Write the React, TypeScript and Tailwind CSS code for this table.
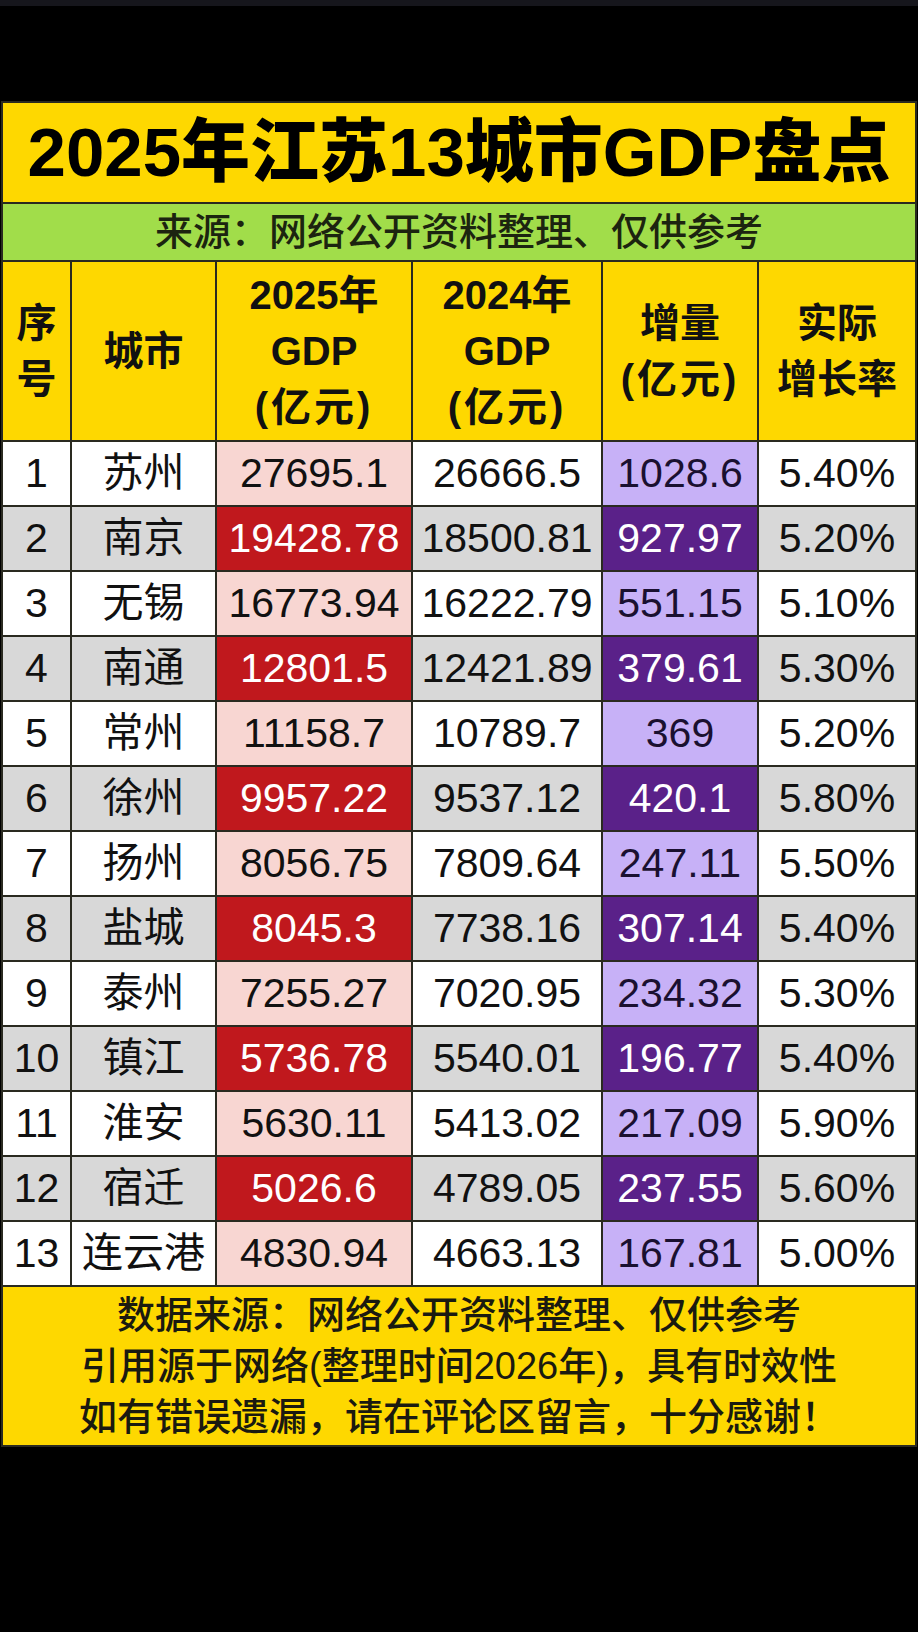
import React from "react";

type Row = [string, string, string, string, string, string];

const rows: Row[] = [
  ["1", "苏州", "27695.1", "26666.5", "1028.6", "5.40%"],
  ["2", "南京", "19428.78", "18500.81", "927.97", "5.20%"],
  ["3", "无锡", "16773.94", "16222.79", "551.15", "5.10%"],
  ["4", "南通", "12801.5", "12421.89", "379.61", "5.30%"],
  ["5", "常州", "11158.7", "10789.7", "369", "5.20%"],
  ["6", "徐州", "9957.22", "9537.12", "420.1", "5.80%"],
  ["7", "扬州", "8056.75", "7809.64", "247.11", "5.50%"],
  ["8", "盐城", "8045.3", "7738.16", "307.14", "5.40%"],
  ["9", "泰州", "7255.27", "7020.95", "234.32", "5.30%"],
  ["10", "镇江", "5736.78", "5540.01", "196.77", "5.40%"],
  ["11", "淮安", "5630.11", "5413.02", "217.09", "5.90%"],
  ["12", "宿迁", "5026.6", "4789.05", "237.55", "5.60%"],
  ["13", "连云港", "4830.94", "4663.13", "167.81", "5.00%"],
];

const font = "font-['Liberation_Sans','Noto_Sans_CJK_SC',sans-serif]";
const head = "h-[178px] bg-[#fed800] flex items-center justify-center text-center text-[40px] font-bold leading-[56px] text-[#111]";

export default function App() {
  return (
    <div className={`w-[918px] h-[1632px] bg-black ${font}`}>
      {/* top status strip */}
      <div className="h-[6px] bg-[#16161c]" />
      <div className="h-[95px]" />

      {/* ---TABLE CARD--- */}
      <div className="ml-[1px] w-[916px] border-2 border-[#2a2a20] bg-[#2a2a20] flex flex-col gap-[2px]">
        {/* title */}
        <div className="h-[99px] bg-[#fed800] flex items-center justify-center">
          <h1 className="text-[69px] font-black leading-none text-black">
            2025年江苏13城市GDP盘点
          </h1>
        </div>

        {/* source band */}
        <div className="h-[56px] bg-[#a1dd4a] flex items-center justify-center">
          <p className="text-[38px] font-medium leading-none text-[#1c2410]">
            来源：网络公开资料整理、仅供参考
          </p>
        </div>

        {/* grid */}
        <div className="grid grid-cols-[67px_143px_194px_188px_154px_156px] gap-[2px]">
          <div className={head}>
            序<br />号
          </div>
          <div className={head}>城市</div>
          <div className={head}>
            <div>
              2025年<br />GDP<br /><span className="tracking-[3px]">(亿元)</span>
            </div>
          </div>
          <div className={head}>
            <div>
              2024年<br />GDP<br /><span className="tracking-[3px]">(亿元)</span>
            </div>
          </div>
          <div className={head}>
            <div>
              增量<br /><span className="tracking-[3px]">(亿元)</span>
            </div>
          </div>
          <div className={head}>
            <div>
              实际<br />增长率
            </div>
          </div>

          {rows.map((r, i) => {
            const even = i % 2 === 1;
            const base = even ? "bg-[#d8d8d8]" : "bg-white";
            const cell = "h-[63px] flex items-center justify-center text-[41px] leading-none whitespace-nowrap";
            return (
              <React.Fragment key={r[0]}>
                <div className={`${cell} ${base} text-[#111]`}>{r[0]}</div>
                <div className={`${cell} ${base} text-[#111]`}>{r[1]}</div>
                <div className={`${cell} ${even ? "bg-[#c0181d] text-white" : "bg-[#f8d6d2] text-[#111]"}`}>{r[2]}</div>
                <div className={`${cell} ${base} text-[#111]`}>{r[3]}</div>
                <div className={`${cell} ${even ? "bg-[#5a2189] text-white" : "bg-[#c7b1f7] text-[#1a1030]"}`}>{r[4]}</div>
                <div className={`${cell} ${base} text-[#111]`}>{r[5]}</div>
              </React.Fragment>
            );
          })}
        </div>

        {/* footer note */}
        <div className="h-[158px] bg-[#fed800] flex flex-col items-center justify-center text-[38px] font-medium leading-[51px] text-[#1a1a10]">
          <p>数据来源：网络公开资料整理、仅供参考</p>
          <p>引用源于网络(整理时间2026年)，具有时效性</p>
          <p>如有错误遗漏，请在评论区留言，十分感谢！</p>
        </div>
      </div>
    </div>
  );
}
